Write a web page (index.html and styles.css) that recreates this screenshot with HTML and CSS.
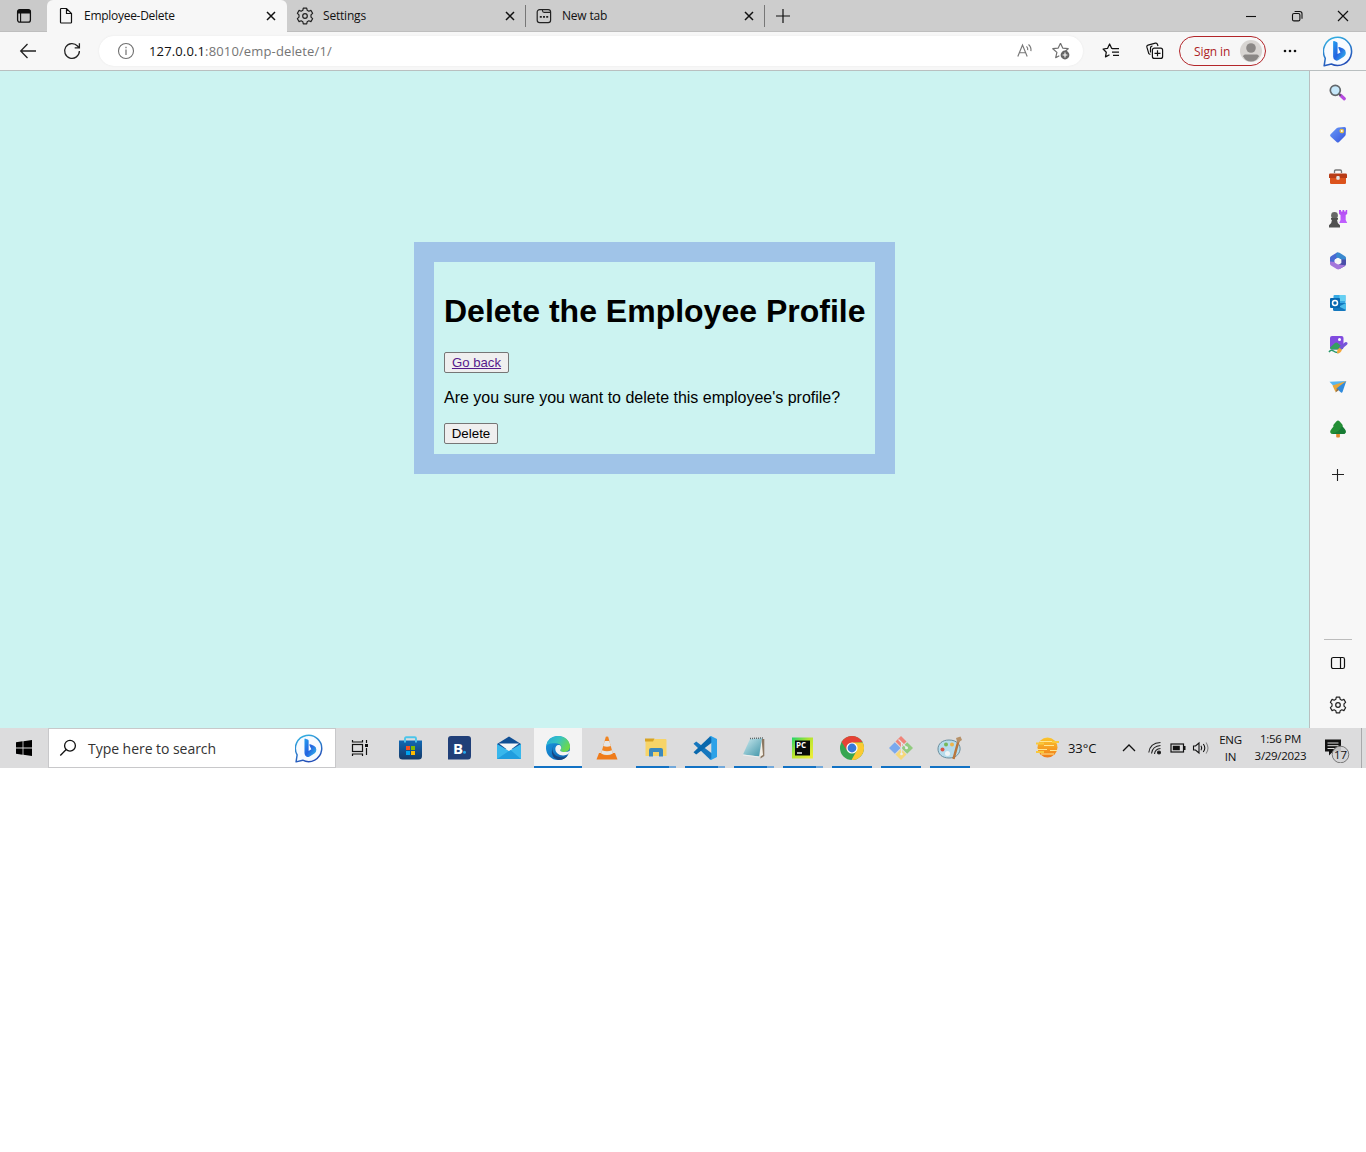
FILE: index.html
```
<!DOCTYPE html>
<html lang="en">
<head>
<meta charset="utf-8">
<title>Employee-Delete</title>
<link rel="stylesheet" href="styles.css">
</head>
<body>
<svg class="defs" width="0" height="0" aria-hidden="true">
  <defs>
    <linearGradient id="bingEdge" x1="0" y1="0" x2="0.4" y2="1"><stop offset="0" stop-color="#35b9e6"/><stop offset="1" stop-color="#2450b8"/></linearGradient>
    <linearGradient id="bingB" x1="0" y1="0" x2="1" y2="1"><stop offset="0" stop-color="#249ff0"/><stop offset=".5" stop-color="#2463e0"/><stop offset="1" stop-color="#35c4ef"/></linearGradient>
    <linearGradient id="tagFill" x1="0" y1="0" x2="1" y2="1"><stop offset="0" stop-color="#6b9cf8"/><stop offset="1" stop-color="#3654dc"/></linearGradient>
    <linearGradient id="purple" x1="0" y1="0" x2="0" y2="1"><stop offset="0" stop-color="#b44cf2"/><stop offset="1" stop-color="#c060ff"/></linearGradient>
    <linearGradient id="edgeBlue" x1="0" y1="0" x2="1" y2="1"><stop offset="0" stop-color="#1b9de2"/><stop offset="1" stop-color="#0b5cac"/></linearGradient>
    <linearGradient id="edgeGreen" x1="0" y1="0" x2="1" y2=".5"><stop offset="0" stop-color="#22a7dc"/><stop offset=".5" stop-color="#35c3c3"/><stop offset="1" stop-color="#6bd84d"/></linearGradient>
    <linearGradient id="storeFill" x1="0" y1="0" x2="0" y2="1"><stop offset="0" stop-color="#1068b4"/><stop offset="1" stop-color="#153a68"/></linearGradient>
    <linearGradient id="sunFill" x1="0" y1="0" x2="0" y2="1"><stop offset="0" stop-color="#fbc62e"/><stop offset="1" stop-color="#f07b18"/></linearGradient>
    <linearGradient id="pcFill" x1="0" y1="0" x2="1" y2="1"><stop offset="0" stop-color="#1fd46c"/><stop offset=".45" stop-color="#b6e52f"/><stop offset="1" stop-color="#f3ee38"/></linearGradient>
    <linearGradient id="padFill" x1="0" y1="0" x2="1" y2="1"><stop offset="0" stop-color="#d0eef2"/><stop offset="1" stop-color="#3f93a7"/></linearGradient>
    <symbol id="close" viewBox="0 0 10 10"><path d="M1 1l8 8M9 1l-8 8" fill="none" stroke="#111" stroke-width="1.5"/></symbol>
    <symbol id="gear" viewBox="0 0 18 18"><g fill="none" stroke="#222" stroke-width="1.2" stroke-linejoin="round"><path d="M7.3 1.2h3.4l.5 2.1 1.6.9 2.1-.8 1.7 2.9-1.6 1.6v2.2l1.6 1.6-1.7 2.9-2.1-.8-1.6.9-.5 2.1H7.3l-.5-2.1-1.6-.9-2.1.8-1.7-2.9L3 10.1V7.9L1.4 6.3l1.7-2.9 2.1.8 1.6-.9z"/><circle cx="9" cy="9" r="2.3"/></g></symbol>
    <symbol id="bing" viewBox="0 0 30 30"><path d="M1.1 28.8l1.1-7.2A13.6 13.6 0 1 1 8 27.1z" fill="#f8fbff" stroke="url(#bingEdge)" stroke-width="1.5" stroke-linejoin="round"/><path d="M9.8 5.5q0-1 1-.7l2.3.9q1 .4 1 1.4v10.400l2.800-1.600-2-4.200q-.5-1.500 1-1l3.600 1.500q2.600 1.200 2.600 4.200 0 2.400-2 3.700l-5.400 3.400q-1.400.8-2.700 0-2.200-1.300-2.200-3.500z" fill="url(#bingB)"/></symbol>
  </defs>
</svg>

<div class="desktop">
  <header class="tabstrip">
    <div class="tab-actions"><svg width="16" height="16" viewBox="0 0 16 16"><rect x="1.6" y="1.6" width="12.8" height="12.6" rx="2.2" fill="none" stroke="#111" stroke-width="1.3"/><path d="M1.5 5.5V3q0-1.5 2-1.5h9q2 0 2 1.5v2.5z" fill="#111"/><path d="M4.6 5v9" stroke="#111" stroke-width="1.1"/></svg></div>
    <div class="tab tab-active">
      <svg width="14" height="18" viewBox="0 0 14 18"><path d="M1.5 2.3q0-.8.8-.8h5.2l5 5v8.7q0 .8-.8.8H2.3q-.8 0-.8-.8zM7.5 1.7v4.8h4.8" fill="none" stroke="#111" stroke-width="1.2"/></svg>
      <span class="tab-title">Employee-Delete</span><svg width="10" height="10"><use href="#close"/></svg>
    </div>
    <div class="tab tab-divided">
      <svg width="18" height="18"><use href="#gear"/></svg>
      <span class="tab-title">Settings</span><svg width="10" height="10"><use href="#close"/></svg>
    </div>
    <div class="tab tab-divided">
      <svg width="18" height="16" viewBox="-1 0 18 16"><rect x="1.2" y="1.6" width="13.4" height="13" rx="2.4" fill="none" stroke="#222" stroke-width="1.2"/><path d="M6.5 1.8v1q0 1.6 1.6 1.6h6.3" fill="none" stroke="#222" stroke-width="1.1"/><path d="M3.8 8.8h8.4" stroke="#222" stroke-width="1.8" stroke-dasharray="2 1.2"/></svg>
      <span class="tab-title">New tab</span><svg width="10" height="10"><use href="#close"/></svg>
    </div>
    <div class="new-tab"><svg width="14" height="14" viewBox="0 0 14 14"><path d="M7 0v14M0 7h14" stroke="#111" stroke-width="1.2"/></svg></div>
    <div class="window-buttons">
      <svg width="12" height="12" viewBox="0 0 12 12"><path d="M1 6.5h10" stroke="#111" stroke-width="1.1"/></svg>
      <svg width="12" height="12" viewBox="0 0 12 12" fill="none" stroke="#111" stroke-width="1.1"><rect x="1.5" y="3.5" width="7.4" height="7.4" rx="1.5"/><path d="M3.6 1.5h5.2q2.2 0 2.2 2.2v5"/></svg>
      <svg width="12" height="12" viewBox="0 0 12 12"><path d="M1 1l10 10M11 1L1 11" stroke="#111" stroke-width="1.2"/></svg>
    </div>
  </header>

  <nav class="toolbar">
    <div class="tool"><svg width="18" height="16" viewBox="0 0 18 16"><path d="M8.5 1L1.7 8l6.8 7M2 8h15" fill="none" stroke="#222" stroke-width="1.3"/></svg></div>
    <div class="tool"><svg width="18" height="18" viewBox="0 0 18 18"><path d="M16.4 9a7.4 7.4 0 1 1-1.9-5L16 5.6M16.4 1.2v4.6h-4.7" fill="none" stroke="#222" stroke-width="1.3"/></svg></div>
    <div class="address">
      <svg width="18" height="18" viewBox="0 0 18 18"><circle cx="9" cy="9" r="7.5" fill="none" stroke="#707070" stroke-width="1.1"/><path d="M9 7.6V13M9 4.8v1.4" stroke="#707070" stroke-width="1.2"/></svg>
      <span class="url"><span class="host">127.0.0.1</span>:8010/emp-delete/1/</span>
      <svg class="read" width="18" height="18" viewBox="0 0 18 18" fill="none" stroke="#777" stroke-width="1.15"><path d="M1.8 14.5L6.5 3l4.7 11.5M3.4 10.7h6.2M10.5 4.4q1.6 1.5 1.2 3.8M12.5 2.5q3 2.5 2.4 6.6"/></svg>
      <svg width="20" height="20" viewBox="0 0 20 20"><path d="M9.5 2.2l2.2 4.9 5.5.6-4 3.6M9.5 2.2L7.2 7.1l-5.4.6 4.1 3.7-1.2 5.3 3.6-2" fill="none" stroke="#707070" stroke-width="1.2" stroke-linejoin="round"/><circle cx="14" cy="14" r="4.4" fill="#666"/><path d="M14 11.6v4.8M11.6 14h4.8" stroke="#fff" stroke-width="1.1"/></svg>
    </div>
    <div class="tool after-address"><svg width="18" height="18" viewBox="0 0 18 18" fill="none" stroke="#111" stroke-width="1.25"><path d="M10.4 6.3H9.6L7.6 2 5.5 6.4l-4.4.6 3.2 3.2-.8 4.7 4-2.2M10 6.5h7M10 10h7M11 13.4h6" stroke-linejoin="round"/></svg></div>
    <div class="tool"><svg width="18" height="18" viewBox="0 0 18 18" fill="none" stroke="#111" stroke-width="1.2"><rect x="6.4" y="6.2" width="10.2" height="10.2" rx="2"/><path d="M11.5 8.3v6M8.5 11.3h6M4.4 12.5l-1.6-.8-1.9-6.5q-.4-1.7 1.1-2.1L9.4 1.2q1.5-.4 2 1.1l.6 1.7M4.5 10.5V6.2q0-2.2 2-2.2"/></svg></div>
    <div class="signin"><span>Sign in</span><svg width="22" height="22" viewBox="0 0 22 22"><circle cx="11" cy="11" r="11" fill="#d8d5d2"/><circle cx="11" cy="8" r="4.8" fill="#8b8886"/><path d="M3.2 16.3q0-1.8 2-1.8h11.6q2 0 2 1.8Q16.5 21.5 11 21.5T3.2 16.3z" fill="#8b8886"/></svg></div>
    <div class="tool dots"><svg width="14" height="4" viewBox="0 0 14 4" fill="#111"><circle cx="2" cy="2" r="1.3"/><circle cx="7" cy="2" r="1.3"/><circle cx="12" cy="2" r="1.3"/></svg></div>
    <div class="tool bing-tool"><svg width="31" height="31"><use href="#bing"/></svg></div>
  </nav>

  <div class="body-row">
    <main class="page">
      <section class="card">
        <h1>Delete the Employee Profile</h1>
        <button class="back" type="button"><a href="#">Go back</a></button>
        <p>Are you sure you want to delete this employee's profile?</p>
        <button class="confirm" type="submit">Delete</button>
      </section>
    </main>
    <aside class="sidebar">
      <div class="side-item"><svg width="18" height="18" viewBox="0 0 18 18"><path d="M11.5 11.3l3.8 3.4" stroke="#b64ae0" stroke-width="3.2" stroke-linecap="round"/><path d="M9.8 9.8l2 1.9" stroke="#555" stroke-width="1.8"/><circle cx="6.3" cy="6.3" r="5" fill="#c6e8fa" stroke="#62676b" stroke-width="1.7"/></svg></div>
      <div class="side-item"><svg width="18" height="18" viewBox="0 0 18 18"><path d="M9.5 1.5l6-.5q1.5 0 1.5 1.5l-.3 6q0 .8-.7 1.4l-6 6q-1.2 1.1-2.4 0L1.6 10.500Q.5 9.200 1.600 8.200l6-6Q8.500 1.500 9.500 1.500z" fill="url(#tagFill)"/><circle cx="12.800" cy="5" r="1.700" fill="#fff" stroke="#e4bd45" stroke-width="1.300"/></svg></div>
      <div class="side-item"><svg width="18" height="18" viewBox="0 0 18 18"><path d="M5.500 5V3.300q0-1.300 1.300-1.300h4.400q1.300 0 1.300 1.300V5" fill="none" stroke="#777" stroke-width="1.300"/><rect x="1" y="8" width="16" height="8" rx="1.300" fill="#dc531c"/><path d="M0 6.800Q0 5.500 1.300 5.500h15.400Q18 5.500 18 6.800V10H0z" fill="#b93c16"/><rect x="7.300" y="8" width="3.400" height="3.800" rx="1" fill="#e2e4e5"/></svg></div>
      <div class="side-item"><svg width="20" height="20" viewBox="0 0 20 20"><path d="M11 1h2v1.500h1.500V1h1.700v1.500h1.500V1h1.500v4l-1.500 1v5l1.500 3h-8l1.300-3V6L11 5z" fill="url(#purple)"/><circle cx="6.500" cy="6.500" r="3.400" fill="#686868"/><path d="M3 9h7v1.700H9l.8 3.300 2.200 2.200v2.300H1v-2.300L3.200 14l.8-3.300H3z" fill="#505050"/></svg></div>
      <div class="side-item"><svg width="18" height="18" viewBox="0 0 18 18"><path d="M1 5.800q0-1 1-1.600L7.200.9q.8-.5 2-.3L9 5.500 5.500 8v5L1 11z" fill="#4a69d2"/><path d="M7.500.8q1.500-.7 3 0L16 4.200q1 .6 1 1.800V10l-4.500-2.200L7 5z" fill="#3a89cf"/><path d="M17 7.500V12q0 1.200-1 1.900L10.500 17 8 14l4.300-3V7.500z" fill="#4a4fa9"/><path d="M1 9.500l4.500.5L10 12.500l6 .8-.3.8-5 3q-1.500.8-3 0L2 13.600q-1-.6-1-1.800z" fill="#a477db"/><path d="M9 5.700l3.100 1.700v3.400L9 12.500l-3.100-1.700V7.400z" fill="#f7f7f7"/></svg></div>
      <div class="side-item"><svg width="18" height="18" viewBox="0 0 18 18"><rect x="4.500" y="1" width="12" height="13" rx="1" fill="#37a9e4"/><path d="M10.500 1h6v6h-6z" fill="#66d0f3"/><path d="M4 9h13v6.500q0 1.500-1.500 1.500h-10Q4 17 4 15.500z" fill="#1478be"/><path d="M17 9v7L10 12.500z" fill="#4bbceb"/><rect x="1" y="4" width="10" height="10" rx="1" fill="#0868b0"/><circle cx="6" cy="9" r="2.500" fill="none" stroke="#fff" stroke-width="1.500"/></svg></div>
      <div class="side-item"><svg width="20" height="20" viewBox="0 0 20 20"><rect x="2" y="1" width="13.500" height="13.500" rx="2" fill="#814bdf"/><path d="M2 12.500l5-4.500q1.300-1 2.600 0l5.400 4.700q-.5 1.800-2 1.800H4q-2 0-2-2z" fill="#35a05f"/><circle cx="11.500" cy="4.600" r="1.500" fill="#fff"/><path d="M1 17q2-3 4.500-1t5 1.500" fill="none" stroke="#28996a" stroke-width="1.500"/><path d="M12.500 13L18 8.500" stroke="#7455d8" stroke-width="3" stroke-linecap="round"/><path d="M9 18.300q0-4.800 3-5.300l1.800 1.900q-1 3.500-4.800 3.400z" fill="#f4a83a"/></svg></div>
      <div class="side-item"><svg width="18" height="18" viewBox="0 0 18 18"><path d="M.5 3.800L17 3 5 8.500z" fill="#58b6f0"/><path d="M5 8l12.300-5-3.800 11q-.5 1-1.500.4z" fill="#318bdc"/><path d="M3.500 7.500L17.300 3 8 10l-1.500 4z" fill="#e9a83b"/><path d="M6.500 14.500l1.200-4.500 2.300 2z" fill="#9b713d"/></svg></div>
      <div class="side-item"><svg width="18" height="18" viewBox="0 0 18 18"><rect x="7.200" y="13" width="3.700" height="4.500" rx=".8" fill="#df8a2d"/><path d="M7.500 1.200q1.500-1.500 3 0l2.600 3.100q1 1.400.4 2.100 4 4.200 3.200 6-.6 1.600-2.500 1.600H3.800Q1.900 14 1.300 12.400q-.7-1.800 3.200-6-.6-.7.400-2.100z" fill="#248f36"/><path d="M4 13q6-.3 9-7 4.500 4.500 3.700 6.400-.6 1.600-2.500 1.600H3.800z" fill="#137333" opacity=".7"/></svg></div>
      <div class="side-item add"><svg width="12" height="12" viewBox="0 0 12 12"><path d="M5.500 0v12M0 5.500h12" stroke="#222" stroke-width="1.100"/></svg></div>
      <div class="side-bottom">
        <div class="side-item"><svg width="16" height="14" viewBox="0 0 16 14" fill="none" stroke="#111" stroke-width="1.200"><rect x="1.500" y="1.500" width="13" height="11" rx="1.800"/><path d="M10.500 1.500v11"/></svg></div>
        <div class="side-item"><svg width="18" height="18"><use href="#gear"/></svg></div>
      </div>
    </aside>
  </div>

  <footer class="taskbar">
    <div class="start"><svg width="16" height="16" viewBox="0 0 16 16"><path d="M0 2.300L6.600 1.300v6.300H0zM7.400 1.200L16 0v7.600H7.400zM0 8.400h6.600v6.300L0 13.700zM7.400 8.400H16V16l-8.600-1.200z"/></svg></div>
    <div class="search">
      <svg width="18" height="18" viewBox="0 0 18 18" fill="none" stroke="#111" stroke-width="1.300"><circle cx="11" cy="6.700" r="5.400"/><path d="M7.200 10.500L1.300 16.500"/></svg>
      <span>Type here to search</span>
      <svg width="29" height="29"><use href="#bing"/></svg>
    </div>
    <div class="taskview"><svg width="18" height="16" viewBox="0 0 18 16" fill="none" stroke="#111" stroke-width="1.200"><path d="M1.500 0v2h10V0M1.500 16v-2h10v2M15.500 0v3M15.500 8v7"/><rect x="1.500" y="4.500" width="10" height="7"/><path d="M14 5.500h3" stroke-width="3"/></svg></div>
    <div class="apps">
      <div class="app"><svg width="24" height="24" viewBox="0 0 24 24"><path d="M0 4.500h23V20q0 3.500-3.500 3.500h-16Q0 23.500 0 20z" fill="url(#storeFill)"/><path d="M6 6.500v-4q0-1.200 1.200-1.200h8.600q1.200 0 1.200 1.200v4" fill="none" stroke="#4cc5ea" stroke-width="1.900"/><path fill="#f25022" d="M7 10h4v4H7z"/><path fill="#7fba00" d="M12 10h4v4h-4z"/><path fill="#00a4ef" d="M7 15h4v4H7z"/><path fill="#ffb900" d="M12 15h4v4h-4z"/></svg></div>
      <div class="app"><svg width="24" height="24" viewBox="0 0 24 24"><path d="M3 0h17q3 0 3 3v17q0 3.500-3 3.500H0V3q0-3 3-3z" fill="#203f78"/><text class="booking" x="5" y="17.500">B</text><circle cx="16.500" cy="16.200" r="1.500" fill="#23a6ed"/></svg></div>
      <div class="app"><svg width="24" height="24" viewBox="0 0 24 24"><path d="M0 8L12 .5 24 8v5H0z" fill="#104f94"/><path d="M0 8l12 7 12-7v15H0z" fill="#38b7ec"/><path d="M13.500 14L24 23H0z" fill="#209dde"/><path d="M2 7.500h20l-9 6.800q-1 .6-2 0z" fill="#f4f6f7"/></svg></div>
      <div class="app app-current"><svg width="26" height="26" viewBox="0 0 26 26"><circle cx="13" cy="13" r="12" fill="url(#edgeBlue)"/><path d="M1.200 11Q2.800 1 13 1c7 0 12 4.900 12 10.300 0 4.200-3.100 5.800-6 5.800-2.700 0-4.700-1-3.400-2.500 2.100-2.400-.1-6.300-4.900-6.300-4 0-7.500 0-9.500 2.700z" fill="url(#edgeGreen)"/><path d="M10 9.500c-4.500 3.500-3 11 4.500 12.600 3.500.7 6.500 0 9-2.600Q20 25 13.500 25 8 23.500 7 18.500 6.500 12 10 9.500z" fill="#154783"/><path d="M15.600 14.600c1-1.400.8-3-.3-4.200-2.800-1.500-5 .6-5 3.400 0 4 3.700 6.900 8 6.700 2.400-.1 4.300-.9 5.700-2.200l1.300-2.600q-2.800 1.400-6.300 1.400c-2.700 0-4.700-1-3.400-2.500z" fill="#f3f3f3"/></svg></div>
      <div class="app"><svg width="22" height="24" viewBox="0 0 22 24"><path d="M3 17h16l2.500 6.500H.5z" fill="#ef7b1a"/><path d="M9.800.8q1.200-.8 2.400 0L17 18q-6 3.500-12 0z" fill="#f08422"/><path d="M8.700 5h4.600l1.500 5q-3.800 1.600-7.600 0zM6 14.300q5 1.800 10 0l.9 3.200q-5.900 3-11.800 0z" fill="#e5e6e6"/></svg></div>
      <div class="app app-open multi"><svg width="24" height="24" viewBox="0 0 24 24"><path d="M1.500 4q0-1 1-1h19q1 0 1 1v16h-21z" fill="#f7d468"/><path d="M1 2.500h9.500L9 5.500H1z" fill="#d8a324"/><path d="M5 20.500V14q0-2 2-2h10q2 0 2 2v6.500h-4V16H9v4.500z" fill="#3b89bd"/></svg></div>
      <div class="app app-open multi"><svg width="25" height="24" viewBox="0 0 25 24"><path d="M.5 7.800l2.700-2.300L19 17.500V23l-2 .5z" fill="#1677be"/><path d="M.5 16.200l2.700 2.300L19 6.500V1L17 .5z" fill="#0968ad"/><path d="M18 0l6 3v18l-6 3-1.500-.5 1.800-1.200V1.700L16.500.5z" fill="#2da2e8"/></svg></div>
      <div class="app app-open multi"><svg width="24" height="24" viewBox="0 0 24 24"><path d="M19.500 3h2.800v17l-3.800 2.500z" fill="#8b7761"/><path d="M19.500 3l1.500 16-3.500 2z" fill="#f2eee5"/><path d="M8 3l12-.8-3 18.300L1 18.500z" fill="url(#padFill)"/><path d="M8 2.500l13-.5" stroke="#5e6a6c" stroke-width="1.500" stroke-dasharray="1 1"/><path d="M1 19l16 2" stroke="#eee" stroke-width="1.200"/></svg></div>
      <div class="app app-open multi"><svg width="24" height="24" viewBox="0 0 24 24"><path d="M1 1.500h21v21H1z" fill="url(#pcFill)"/><path d="M4 4.500h15v15H4z" fill="#080b08"/><text class="pycharm" x="5" y="11.800">PC</text><path d="M6 17h5" stroke="#fff" stroke-width="1.400"/></svg></div>
      <div class="app app-open"><svg width="24" height="24" viewBox="0 0 24 24"><circle cx="12" cy="12" r="12" fill="#36a651"/><path d="M1.600 6A12 12 0 0 1 22.400 6L12 7 7 14.500z" fill="#e64236"/><path d="M12 6.500h10.700A12 12 0 0 1 11.500 24l5-9z" fill="#fbca32"/><circle cx="12" cy="12" r="5.600" fill="#fff"/><circle cx="12" cy="12" r="4.400" fill="#3879d8"/></svg></div>
      <div class="app app-open"><svg width="24" height="24" viewBox="0 0 24 24"><path d="M12 0l5.500 5.500L12 11 6.500 5.500z" fill="#f08379"/><path d="M5.800 6.200L11.600 12l-5.800 5.800L0 12z" fill="#7aa9ee"/><path d="M18.200 6.200L24 12l-5.800 5.800-5.800-5.800z" fill="#91cb80"/><path d="M12 13l5.500 5.500L12 24l-5.500-5.500z" fill="#f5d879"/><path d="M9.500 3.500L17 11M12.500 7v11" stroke="#e4e4e4" stroke-width="1.200"/><g fill="#eee"><circle cx="17.500" cy="11.800" r="1.500"/><circle cx="12.500" cy="18" r="1.300"/></g></svg></div>
      <div class="app app-open"><svg width="26" height="24" viewBox="0 0 26 24"><path d="M12 4C5 4 1 8 1 13c0 5 4 9 11 9 6 0 10-3 11-8 .8-5-3-10-11-10z" fill="#b6dcec" stroke="#688e9e" stroke-width="1"/><circle cx="10.500" cy="17.500" r="2.500" fill="#eef4f5"/><circle cx="5.500" cy="13.500" r="2" fill="#db5548"/><circle cx="9" cy="8.500" r="2" fill="#77b85a"/><circle cx="15" cy="8.500" r="2" fill="#efb54a"/><path d="M22 3L16.500 23" stroke="#b9763c" stroke-width="2.500"/><path d="M19 2l4.500-1.500L25 4l-4.500 3z" fill="#b79168"/></svg></div>
    </div>
    <div class="weather"><svg width="23" height="22" viewBox="0 0 23 22"><circle cx="11.500" cy="10.500" r="10" fill="url(#sunFill)"/><path d="M4 4.500h15M8 8.500h10M1 12.500h10M14 13.500h7M5 17h13" stroke="#ffe793" stroke-width="1.100"/><path d="M0 6.500h8M16 5h7M0 15h8" stroke="#f9c93c" stroke-width="2"/></svg><span>33°C</span></div>
    <div class="tray">
      <svg width="14" height="8" viewBox="0 0 14 8"><path d="M1 7l6-6 6 6" fill="none" stroke="#111" stroke-width="1.300"/></svg>
      <svg width="14" height="14" viewBox="0 0 14 14" fill="none" stroke="#222" stroke-width="1.100"><path d="M.8 11.500Q2 2 12.500 1.500M3.500 12.500Q4.500 5 12.500 4.500M6.500 13Q7 8 12.500 7.500"/><circle cx="11" cy="11.500" r="1.500" fill="#111"/></svg>
      <svg width="16" height="10" viewBox="0 0 16 10"><rect x="1" y="1" width="12.500" height="8" fill="none" stroke="#111" stroke-width="1.200"/><path d="M2.800 2.800h7v4.400h-7zM14 3h1.500v4H14z" fill="#111"/></svg>
      <svg width="18" height="14" viewBox="0 0 18 14" fill="none" stroke="#111" stroke-width="1.100"><path d="M1.500 5v4h2l3.500 3V2L3.500 5zM9 4.800q1.500 2.200 0 4.400M11.300 3q3 4 0 8"/><path d="M14 1.500q4 5.500 0 11" stroke="#888"/></svg>
    </div>
    <div class="lang"><span>ENG</span><span>IN</span></div>
    <div class="clock"><span>1:56 PM</span><span>3/29/2023</span></div>
    <div class="notice"><svg width="26" height="26" viewBox="0 0 26 26"><path d="M0 2.500h16v12H8l-4 4v-4H0z" fill="#111"/><path d="M2.500 6h11M2.500 8.700h11M2.500 11.500h7" stroke="#ddd" stroke-width="1"/><circle cx="15.500" cy="17.500" r="8.300" fill="#d4d4d6" fill-opacity=".88" stroke="#777" stroke-width="1"/><text class="count" x="15.500" y="21.500">17</text></svg></div>
  </footer>
</div>
</body>
</html>
```
FILE: styles.css
```
* { box-sizing: border-box; }
body { margin: 0; background: #fff; }
.defs { display: block; position: absolute; }
svg { flex: none; display: block; }
.desktop {
  width: 1366px;
  height: 768px;
  display: grid;
  grid-template-rows: 32px 39px 657px 40px;
  font-family: "Open Sans", "Noto Sans", sans-serif;
  color: #111;
}

/* Tab strip */
.tabstrip { display: flex; background: #cdcdcd; border-bottom: 1px solid #bebebe; }
.tab-actions { width: 47px; display: flex; align-items: center; justify-content: center; background: #cacaca; border-radius: 0 0 4px 0; }
.tab { width: 239px; display: flex; align-items: center; padding: 0 10px 0 9px; font-size: 12px; letter-spacing: -.2px; }
.tab-title { margin-left: 9px; flex: 1; line-height: 16px; }
.tab-active { width: 240px; height: 32px; background: #f7f7f7; border-radius: 6px 6px 0 0; padding: 0 11px 0 12px; letter-spacing: -.28px; }
.tab-active .tab-title { margin-left: 11px; }
.tab-divided { border-right: 1px solid #777; border-image: linear-gradient(transparent 6px, #777 6px, #777 26px, transparent 26px) 1; }
.new-tab { width: 35px; display: grid; place-items: center; }
.window-buttons { flex: none; width: 138px; margin-left: auto; display: grid; grid-template-columns: repeat(3, 46px); place-items: center; }

/* Toolbar */
.toolbar { display: flex; align-items: center; padding-left: 6px; background: #f7f7f7; border-bottom: 1px solid #b9bfc0; }
.tool { width: 44px; display: grid; place-items: center; }
.address { width: 984px; height: 30px; margin-left: 5px; border-radius: 15px; background: #fff; box-shadow: 0 0 2px #e6e6e6; display: flex; align-items: center; padding: 0 12px 0 18px; }
.url { flex: 1; margin-left: 14px; font-size: 13px; line-height: 18px; letter-spacing: .14px; color: #757575; }
.host { color: #111; }
.read { margin-right: 17px; }
.after-address { margin-left: 6px; }
.signin { width: 87px; height: 30px; margin-left: 2px; border: 1px solid #b3262a; border-radius: 15px; display: flex; align-items: center; justify-content: space-between; padding: 0 3px 0 14px; font-size: 12px; letter-spacing: -.1px; color: #ad2226; }
.dots { margin-left: 2px; }
.bing-tool { margin-left: 4px; }

/* Web page */
.body-row { display: grid; grid-template-columns: 1309px 57px; }
.page { background: #ccf3f1; padding-top: 171px; font: 16px "Liberation Sans", Arial, sans-serif; color: #000; }
.card { width: 481px; height: 232px; margin: 0 auto; border: 20px solid #a0c4e8; padding: 10px; }
.card h1 { margin: 21.44px 0; font-size: 32px; line-height: 37px; white-space: nowrap; }
.card p { margin: 16px 0; line-height: 18px; }
.card button { display: block; height: 21px; padding: 1px 0; border: 1px solid #767676; border-radius: 2px; background: #efefef; color: #000; font: 13.333px/15px "Liberation Sans", Arial, sans-serif; white-space: nowrap; }
.card a { color: #551a8b; text-decoration: underline; }
.card .back { width: 65px; font-size: 13.2px; }
.card .confirm { width: 54px; }

/* Sidebar */
.sidebar { background: #f7f7f7; border-left: 1px solid #b9bfc0; padding-top: 1px; display: flex; flex-direction: column; align-items: center; }
.side-item { width: 56px; height: 42px; display: grid; place-items: center; }
.add { margin-top: 4px; }
.side-bottom { margin-top: auto; width: 28px; height: 89px; border-top: 1px solid #bcbcbc; padding-top: 2px; display: flex; flex-direction: column; align-items: center; }

/* Taskbar */
.taskbar { display: flex; background: #dcdcdd; }
.start { width: 48px; display: grid; place-items: center; }
.search { width: 288px; border: 1px solid #c8c8ca; background: #fff; display: flex; align-items: center; padding: 0 11px 0 10px; font-size: 14px; letter-spacing: -.04px; color: #333; }
.search span { flex: 1; margin-left: 11px; white-space: nowrap; }
.taskview { width: 48px; margin-right: 3px; display: grid; place-items: center; }
.apps { display: grid; grid-template-columns: repeat(12, 48px); column-gap: 1px; }
.app { display: grid; place-items: center; border-bottom: 2px solid transparent; padding-top: 2px; }
.app-current { background: #f3f3f3; border-bottom-color: #1272c4; }
.app-open { margin: 0 4px; border-bottom-color: #1272c4; }
.multi { border-image: linear-gradient(to right, #1272c4 80%, #72a8da 80%) 2; }
.weather { flex: none; width: 77px; margin-left: 62px; display: flex; align-items: center; gap: 9px; font-size: 13px; letter-spacing: -.1px; }
.tray { display: grid; grid-template-columns: 32px 20px 25px 21px; place-items: center; }
.lang, .clock { display: grid; grid-template-rows: 17px 17px; align-content: center; justify-items: center; padding-bottom: 1px; font-size: 11.5px; line-height: 17px; letter-spacing: -.3px; }
.lang { width: 39px; }
.clock { width: 61px; padding-bottom: 2px; }
.notice { margin-left: 14px; width: 37px; border-right: 1px solid #a9a9ab; padding-top: 9px; }
.booking { font: 700 15px "Open Sans", sans-serif; fill: #fff; }
.pycharm { font: 700 8px "Open Sans", sans-serif; fill: #fff; }
.count { font: 11.5px "Open Sans", sans-serif; text-anchor: middle; fill: #111; }
```
